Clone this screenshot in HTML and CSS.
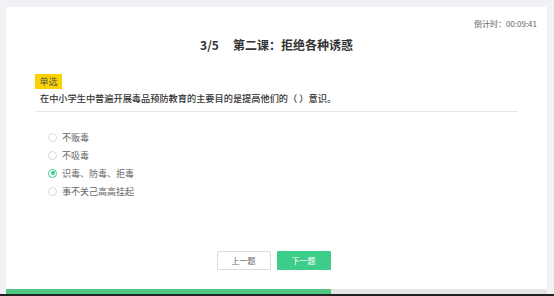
FILE: index.html
```html
<!DOCTYPE html>
<html lang="zh">
<head>
<meta charset="utf-8">
<title>第二课：拒绝各种诱惑</title>
<link rel="stylesheet" href="styles.css">
</head>
<body>
<div class="page">
  <div class="card">
    <div class="timer">倒计时：00:09:41</div>
    <h1 class="title"><span class="num">3/5</span>第二课：拒绝各种诱惑</h1>
    <div class="qhead">
      <span class="tag">单选</span>
      <div class="question">在中小学生中普遍开展毒品预防教育的主要目的是提高他们的（ ）意识。</div>
    </div>
    <ul class="options">
      <li class="option"><span class="radio"></span>不贩毒</li>
      <li class="option"><span class="radio"></span>不吸毒</li>
      <li class="option selected"><span class="radio"></span>识毒、防毒、拒毒</li>
      <li class="option"><span class="radio"></span>事不关己高高挂起</li>
    </ul>
    <div class="spacer"></div>
    <div class="footer">
      <button class="btn btn-prev">上一题</button>
      <button class="btn btn-next">下一题</button>
    </div>
    <div class="progress"><div class="progress-fill" style="width:60%"></div></div>
  </div>
</div>
<div class="edge"></div>
</body>
</html>
```

FILE: styles.css
```css
* { box-sizing: border-box; }
html, body { margin: 0; padding: 0; }
body {
  width: 554px;
  height: 296px;
  overflow: hidden;
  background: #f1f2f6;
  font-family: "Noto Sans CJK SC", "Noto Sans", sans-serif;
  font-size: 9px;
  display: flex;
  flex-direction: column;
}
.page {
  flex: 1;
  display: flex;
  flex-direction: column;
  padding: 7px 7px 0 6px;
  min-height: 0;
}
.card {
  flex: 1;
  background: #fff;
  display: flex;
  flex-direction: column;
}
.timer {
  margin-top: 11px;
  font-size: 8px;
  line-height: 12px;
  color: #666;
  text-align: right;
  padding-right: 10px;
}
.title {
  margin: 7px 0 0;
  font-size: 12px;
  line-height: 16px;
  font-weight: 700;
  color: #333;
  text-align: center;
}
.title .num { margin-right: 14px; }
.qhead {
  margin: 21px 29px 0;
  border-bottom: 1px solid #e6e6e6;
  padding-bottom: 6px;
  display: flex;
  flex-direction: column;
  align-items: flex-start;
}
.tag {
  display: block;
  height: 15px;
  line-height: 15px;
  padding: 0 4.5px;
  font-size: 9px;
  background: #fcd200;
  color: #555;
}
.question {
  margin-top: 2px;
  padding-left: 5px;
  font-size: 9.2px;
  line-height: 14px;
  font-weight: 500;
  color: #333;
}
.options {
  list-style: none;
  margin: 16px 0 0;
  padding: 0 0 0 42px;
}
.option {
  display: flex;
  align-items: center;
  height: 18px;
  font-size: 9px;
  color: #666;
}
.radio {
  width: 9px;
  height: 9px;
  border: 1px solid #d9d9d9;
  border-radius: 50%;
  margin-right: 5px;
  display: flex;
  align-items: center;
  justify-content: center;
}
.selected .radio { border-color: #3dcd8b; }
.selected .radio::after {
  content: "";
  width: 4px;
  height: 4px;
  border-radius: 50%;
  background: #3dcd8b;
}
.spacer { flex: 1; }
.footer {
  display: flex;
  justify-content: center;
  gap: 6px;
  padding-right: 6px;
  margin-bottom: 19px;
}
.btn {
  width: 54px;
  height: 19px;
  font-family: inherit;
  font-size: 8px;
  border-radius: 1px;
  padding: 0;
  cursor: pointer;
}
.btn-prev {
  background: #fff;
  border: 1px solid #dcdcdc;
  color: #666;
}
.btn-next {
  background: #3dcd8b;
  border: 1px solid #3dcd8b;
  color: #fff;
}
.progress {
  height: 5px;
  background: #e6e6e6;
}
.progress-fill {
  height: 100%;
  background: #52c784;
}
.edge {
  height: 2px;
  background: #222;
}
```
